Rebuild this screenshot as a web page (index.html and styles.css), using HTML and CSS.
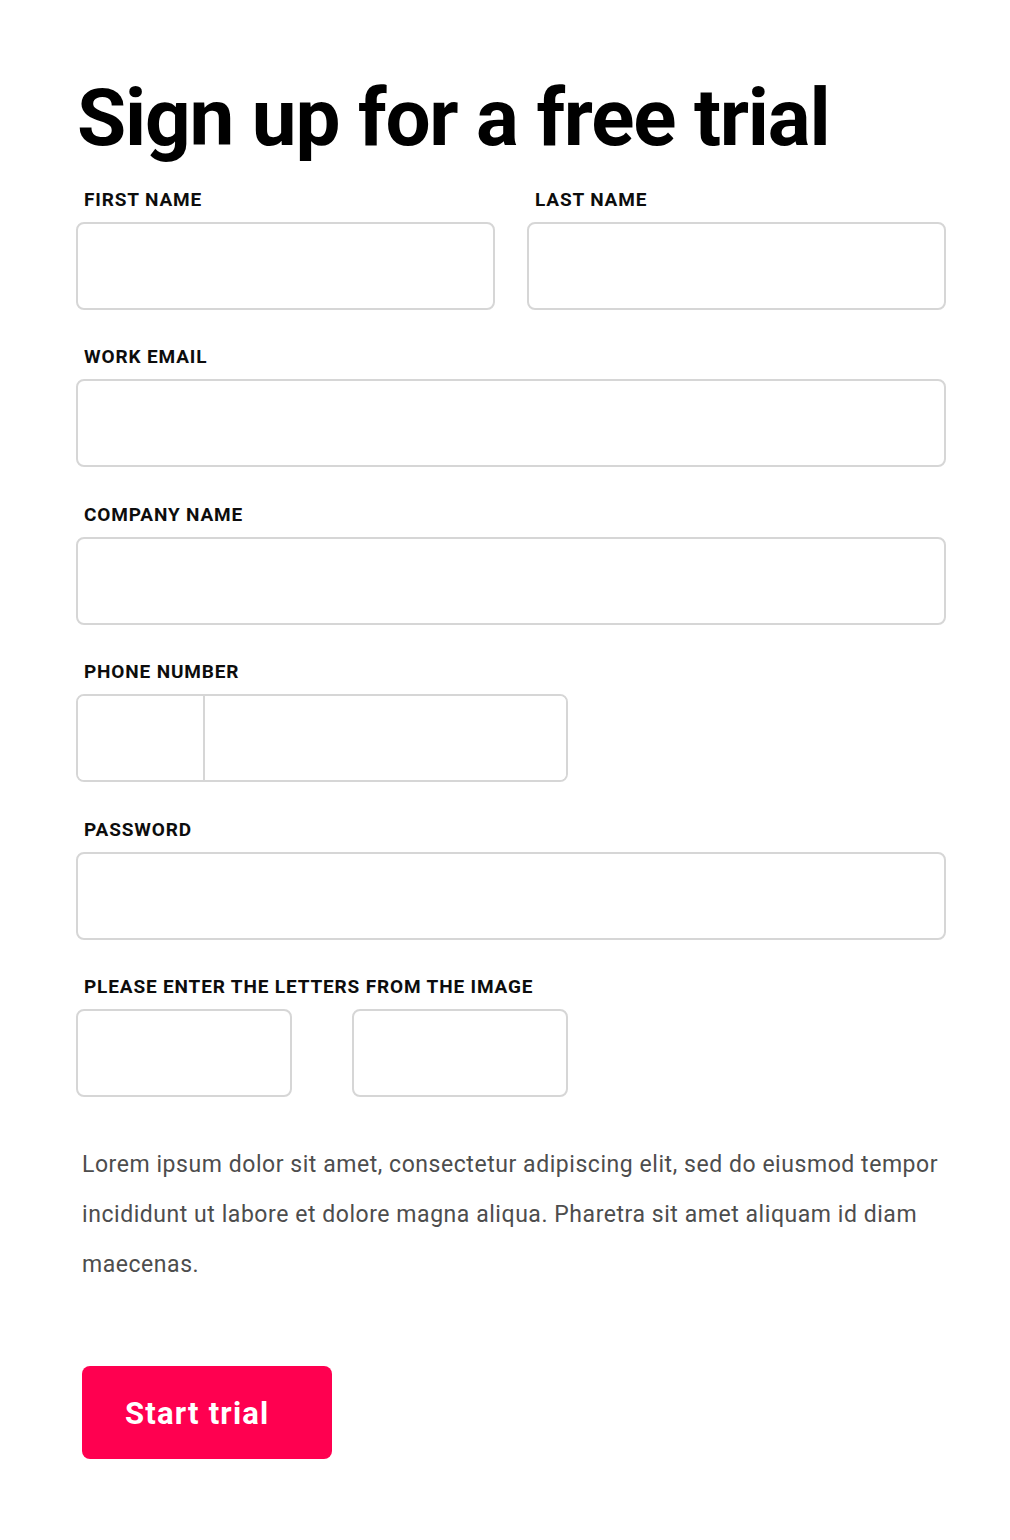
FILE: index.html
```html
<!DOCTYPE html>
<html lang="en">
<head>
<meta charset="utf-8">
<title>Sign up for a free trial</title>
<link rel="stylesheet" href="styles.css">
</head>
<body>
<main class="signup">
  <h1 class="title">Sign up for a free trial</h1>
  <form class="form">
    <div class="row two">
      <div class="field">
        <label class="label">FIRST NAME</label>
        <input class="input" type="text">
      </div>
      <div class="field">
        <label class="label">LAST NAME</label>
        <input class="input" type="text">
      </div>
    </div>
    <div class="field">
      <label class="label">WORK EMAIL</label>
      <input class="input" type="email">
    </div>
    <div class="field">
      <label class="label">COMPANY NAME</label>
      <input class="input" type="text">
    </div>
    <div class="field narrow">
      <label class="label">PHONE NUMBER</label>
      <div class="phone">
        <input class="phone-code" type="text">
        <input class="phone-num" type="tel">
      </div>
    </div>
    <div class="field">
      <label class="label">PASSWORD</label>
      <input class="input" type="password">
    </div>
    <div class="field narrow">
      <label class="label">PLEASE ENTER THE LETTERS FROM THE IMAGE</label>
      <div class="captcha">
        <input class="input" type="text">
        <input class="input" type="text">
      </div>
    </div>
    <p class="note">Lorem ipsum dolor sit amet, consectetur adipiscing elit, sed do eiusmod tempor incididunt ut labore et dolore magna aliqua. Pharetra sit amet aliquam id diam maecenas.</p>
    <button class="btn" type="button">Start trial</button>
  </form>
</main>
</body>
</html>
```

FILE: styles.css
```css
* { box-sizing: border-box; }

html, body {
  margin: 0;
  padding: 0;
  background: #ffffff;
}

body {
  font-family: Roboto, "Liberation Sans", Arial, sans-serif;
  color: #111;
}

.signup {
  width: 870px;
  margin-left: 76px;
  padding-top: 78px;
}

.title {
  margin: 0;
  padding-left: 1px;
  font-size: 80px;
  line-height: 80px;
  font-weight: 700;
  letter-spacing: -1.2px;
  color: #000;
}

.form {
  display: flex;
  flex-direction: column;
  margin-top: 27.5px;
}

.row.two {
  display: grid;
  grid-template-columns: 1fr 1fr;
  column-gap: 32px;
}

.field {
  display: flex;
  flex-direction: column;
  margin-bottom: 33.5px;
}

.field.narrow {
  width: 492px;
}

.label {
  display: block;
  padding: 2px 0 0 8px;
  font-size: 19px;
  line-height: 24px;
  font-weight: 700;
  letter-spacing: 0.85px;
  color: #0d0d0d;
  margin-bottom: 10px;
}

.input {
  display: block;
  width: 100%;
  height: 88px;
  border: 2px solid #d6d6d6;
  border-radius: 8px;
  background: #fff;
  outline: none;
  font: inherit;
}

.phone {
  display: flex;
  height: 88px;
  border: 2px solid #d6d6d6;
  border-radius: 8px;
  overflow: hidden;
}

.phone-code {
  width: 127px;
  border: 0;
  border-right: 2px solid #d6d6d6;
  outline: none;
  background: #fff;
}

.phone-num {
  flex: 1;
  border: 0;
  outline: none;
  background: #fff;
}

.captcha {
  display: grid;
  grid-template-columns: 216px 216px;
  column-gap: 60px;
}

.note {
  margin: 9px 0 0 6px;
  font-size: 23px;
  line-height: 50px;
  letter-spacing: 0.55px;
  color: #4d4d4d;
}

.btn {
  align-self: flex-start;
  margin: 76px 0 0 6px;
  width: 250px;
  height: 93px;
  border: 0;
  border-radius: 8px;
  background: #ff0050;
  color: #fff;
  font-family: Roboto, "Liberation Sans", Arial, sans-serif;
  font-size: 31px;
  font-weight: 700;
  letter-spacing: 1.2px;
  text-align: left;
  padding: 2px 0 0 43px;
  cursor: pointer;
}
```
